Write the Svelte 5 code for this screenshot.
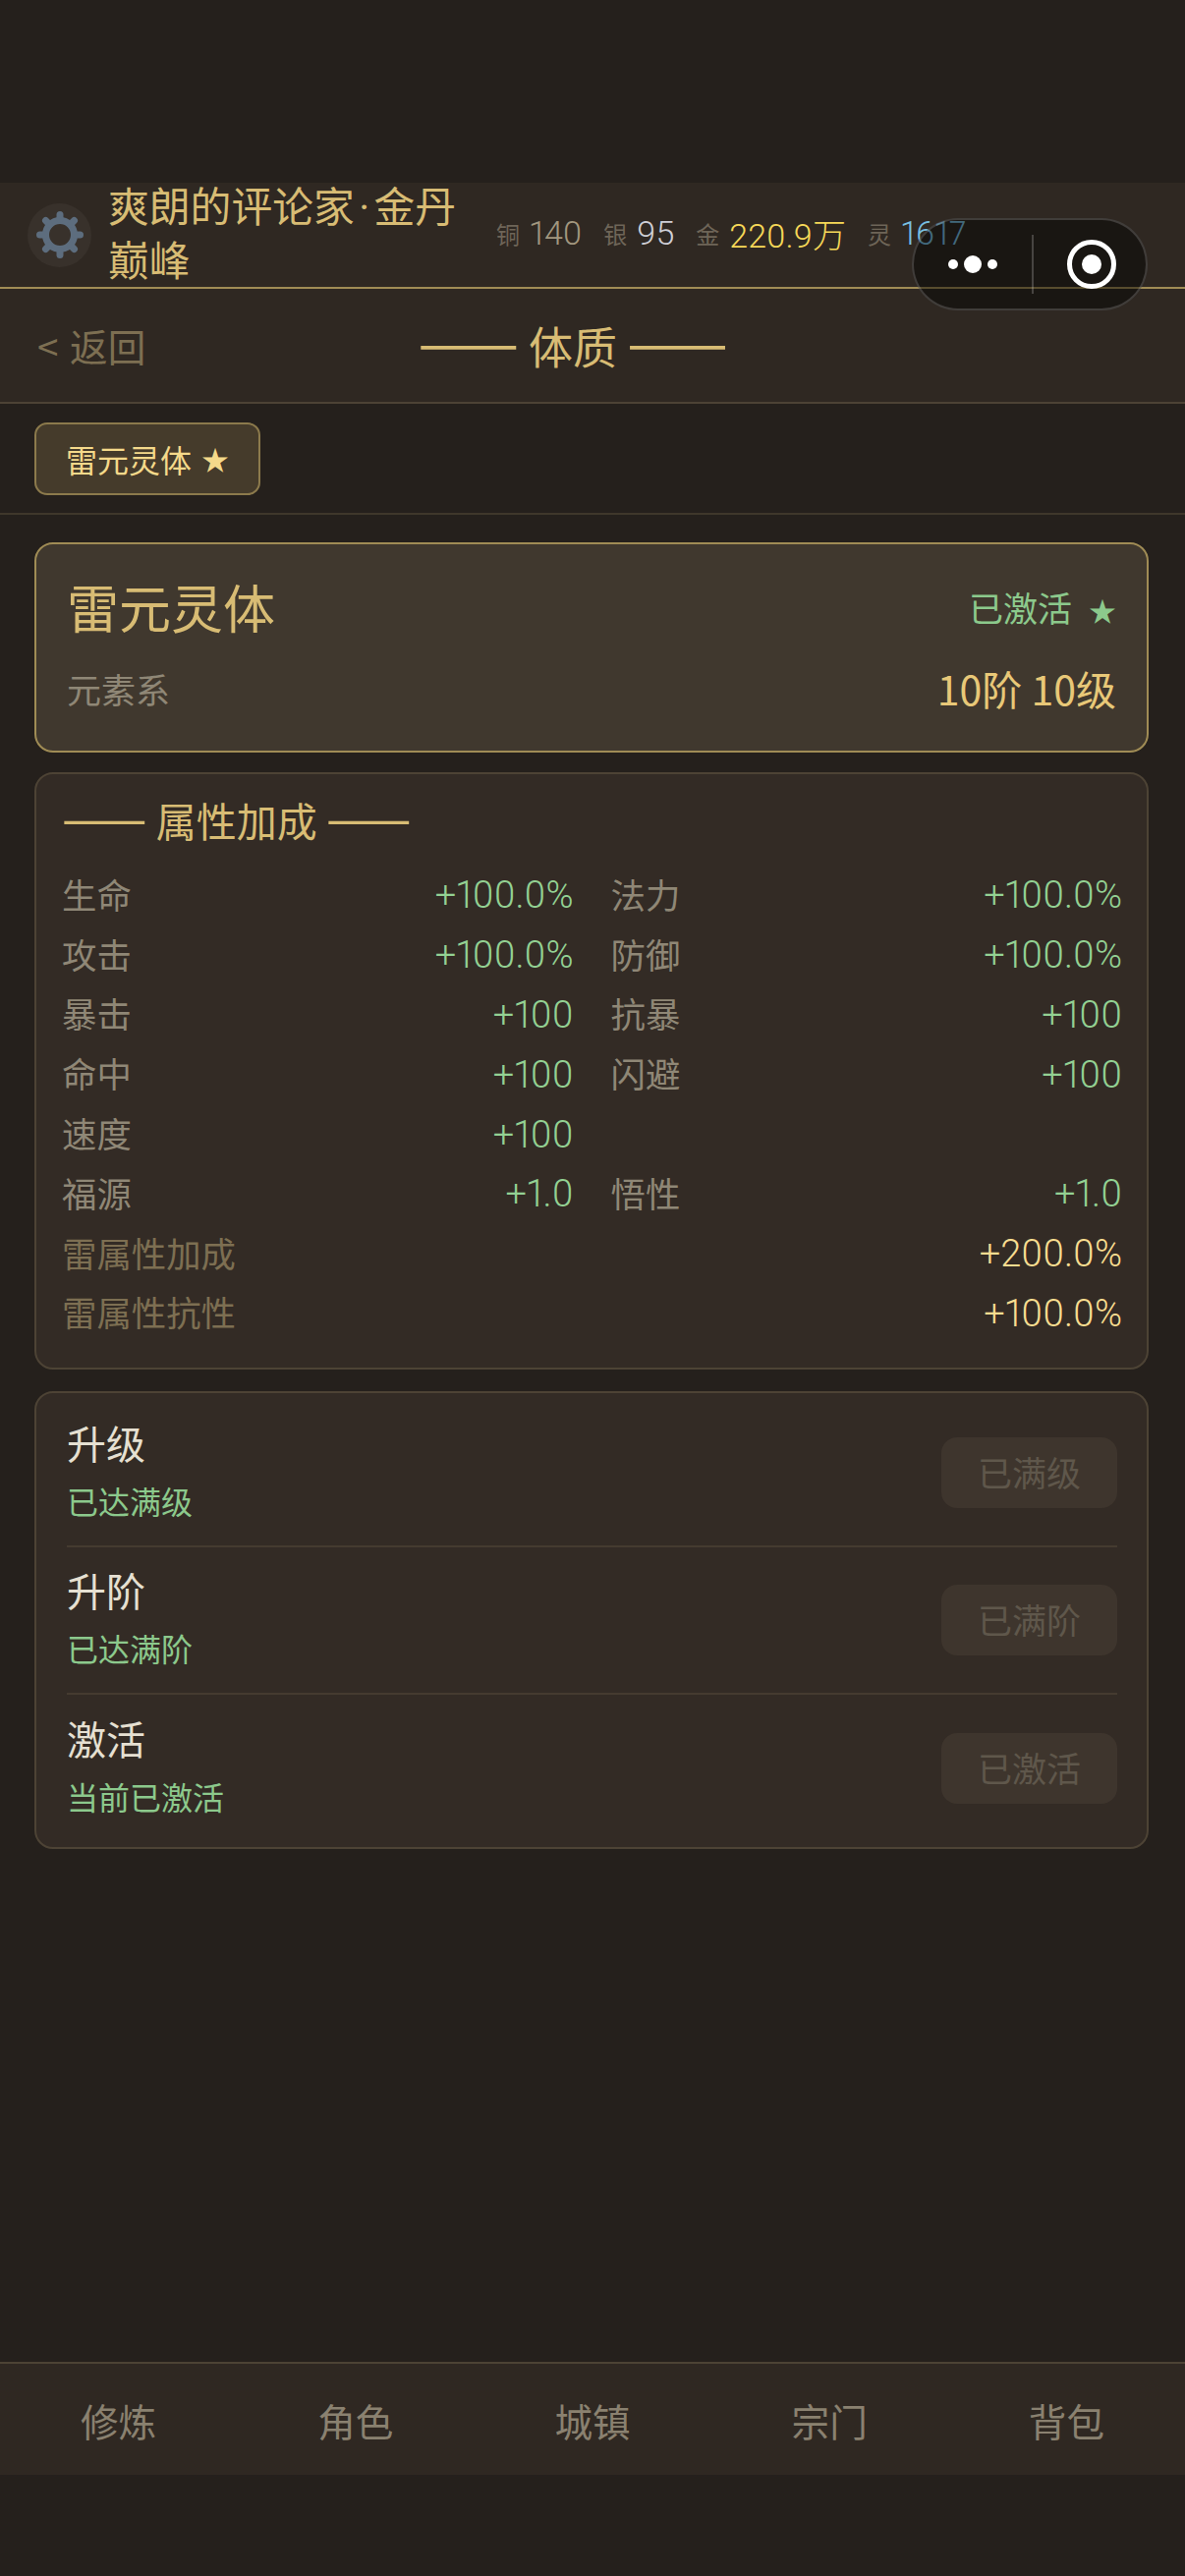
<script>
  const stats = [
    { label: '铜', value: '140', cls: 'copper' },
    { label: '银', value: '95', cls: 'silver' },
    { label: '金', value: '220.9万', cls: 'gold' },
    { label: '灵', value: '1617', cls: 'spirit' }
  ]
  const attrs = [
    ['生命', '+100.0%'], ['法力', '+100.0%'],
    ['攻击', '+100.0%'], ['防御', '+100.0%'],
    ['暴击', '+100'], ['抗暴', '+100'],
    ['命中', '+100'], ['闪避', '+100'],
    ['速度', '+100'], ['', ''],
    ['福源', '+1.0'], ['悟性', '+1.0']
  ]
  const extras = [
    ['雷属性加成', '+200.0%'],
    ['雷属性抗性', '+100.0%']
  ]
  const actions = [
    { name: '升级', note: '已达满级', btn: '已满级' },
    { name: '升阶', note: '已达满阶', btn: '已满阶' },
    { name: '激活', note: '当前已激活', btn: '已激活' }
  ]
  const tabs = ['修炼', '角色', '城镇', '宗门', '背包']
  const teeth = [0, 45, 90, 135, 180, 225, 270, 315]
</script>

<div class="page">
  <header class="top">
    <div class="avatar">
      <svg width="48" height="48" viewBox="0 0 48 48" fill="none" stroke="#5d6d7e">
        <circle cx="24" cy="24" r="14.5" stroke-width="7" />
        {#each teeth as a}
          <line x1="24" y1="8" x2="24" y2="3.5" stroke-width="7" stroke-linecap="round" transform="rotate({a} 24 24)" />
        {/each}
      </svg>
    </div>
    <div class="name">爽朗的评论家 · 金丹巅峰</div>
    <div class="stats">
      {#each stats as s}
        <span class="stat"><span class="stat-label">{s.label}</span><span class="num {s.cls}">{s.value}</span></span>
      {/each}
    </div>
  </header>

  <div class="capsule">
    <div class="dots"><i></i><i class="big"></i><i></i></div>
    <div class="sep"></div>
    <div class="target"><i></i></div>
  </div>

  <nav class="nav">
    <span class="back">&lt; 返回</span>
    <span class="title"><span class="dash">——</span> 体质 <span class="dash">——</span></span>
  </nav>

  <div class="chips">
    <span class="chip">雷元灵体<span class="star">★</span></span>
  </div>

  <main class="content">
    <section class="hero">
      <div class="hero-row">
        <span class="hero-name">雷元灵体</span>
        <span class="hero-state">已激活<span class="star wide">★</span></span>
      </div>
      <div class="hero-row second">
        <span class="hero-type">元素系</span>
        <span class="hero-level">10阶 10级</span>
      </div>
    </section>

    <section class="card attrs">
      <div class="section-title"><span class="dash">——</span> 属性加成 <span class="dash">——</span></div>
      <div class="grid">
        {#each attrs as [k, v]}
          <div class="row"><span class="key">{k}</span><span class="num val">{v}</span></div>
        {/each}
      </div>
      {#each extras as [k, v]}
        <div class="row extra"><span class="key">{k}</span><span class="num val">{v}</span></div>
      {/each}
    </section>

    <section class="card actions">
      {#each actions as a}
        <div class="action">
          <div>
            <div class="action-name">{a.name}</div>
            <div class="action-note">{a.note}</div>
          </div>
          <span class="action-btn">{a.btn}</span>
        </div>
      {/each}
    </section>
  </main>

  <footer class="tabbar">
    {#each tabs as t}
      <span class="tab">{t}</span>
    {/each}
  </footer>
</div>

<style>
  :global(body) {
    margin: 0;
    background: #25201c;
  }
  .page {
    position: relative;
    height: 2622px;
    padding-top: 186px;
    box-sizing: border-box;
    display: flex;
    flex-direction: column;
    background: #25201c;
    overflow: hidden;
    font-family: "Noto Sans CJK SC", sans-serif;
  }
  .num {
    font-family: Roboto, "Noto Sans CJK SC", sans-serif;
    font-variant-numeric: proportional-nums;
    font-weight: 300;
  }
  .dash {
    line-height: 0;
  }
  .star {
    font-size: 28px;
    margin-left: 10px;
  }
  .star.wide {
    margin-left: 17px;
  }
  .top {
    height: 108px;
    box-sizing: border-box;
    display: flex;
    align-items: center;
    padding-left: 28px;
    background: #2f2822;
    border-bottom: 2px solid #a08c55;
  }
  .avatar {
    width: 65px;
    height: 65px;
    flex: none;
    border-radius: 50%;
    background: #38312b;
    display: flex;
    align-items: center;
    justify-content: center;
  }
  .name {
    width: 360px;
    padding-right: 35px;
    flex: none;
    margin-left: 17px;
    font-family: Roboto, "Noto Sans CJK SC", sans-serif;
    font-size: 41.8px;
    line-height: 55px;
    word-spacing: -6px;
    color: #d8bc74;
  }
  .stats {
    display: flex;
    gap: 22px;
    margin-top: -4px;
    white-space: nowrap;
  }
  .stat {
    display: flex;
    align-items: center;
    gap: 10px;
  }
  .stat-label {
    font-size: 24px;
    color: #6e6558;
  }
  .stat .num {
    font-size: 34px;
  }
  .copper { color: #a2977f; }
  .silver { color: #cfcfd6; }
  .gold { color: #f6d858; }
  .spirit { color: #78bfe0; }

  .capsule {
    position: absolute;
    left: 928px;
    top: 222px;
    width: 240px;
    height: 94px;
    box-sizing: border-box;
    border-radius: 47px;
    border: 2px solid rgba(255, 255, 255, 0.17);
    background: rgba(0, 0, 0, 0.45);
    display: flex;
    align-items: center;
  }
  .dots {
    width: 120px;
    display: flex;
    align-items: center;
    justify-content: center;
    gap: 6px;
  }
  .dots i {
    width: 10px;
    height: 10px;
    border-radius: 50%;
    background: #fff;
  }
  .dots i.big {
    width: 18px;
    height: 18px;
  }
  .sep {
    width: 2px;
    height: 60px;
    background: rgba(255, 255, 255, 0.2);
  }
  .target {
    width: 50px;
    height: 50px;
    box-sizing: border-box;
    margin-left: 34px;
    border: 5px solid #fff;
    border-radius: 50%;
    display: flex;
    align-items: center;
    justify-content: center;
  }
  .target i {
    width: 20px;
    height: 20px;
    border-radius: 50%;
    background: #fff;
  }

  .nav {
    height: 117px;
    box-sizing: border-box;
    display: flex;
    align-items: center;
    padding: 0 188px 0 38px;
    background: #2f2822;
    border-bottom: 2px solid #4d4335;
  }
  .back {
    font-size: 38.6px;
    color: #7d6f52;
    word-spacing: 3px;
    margin-top: -2px;
  }
  .title {
    flex: 1;
    text-align: center;
    font-size: 45px;
    color: #d8bc74;
  }
  .title .dash {
    font-size: 1.36em;
  }
  .chips {
    height: 113px;
    box-sizing: border-box;
    display: flex;
    align-items: center;
    padding-left: 35px;
    border-bottom: 2px solid #3f372b;
  }
  .chip {
    height: 74px;
    width: 230px;
    box-sizing: border-box;
    display: flex;
    align-items: center;
    justify-content: center;
    border: 2px solid #8c7a4c;
    border-radius: 13px;
    background: #453b2b;
    font-size: 32px;
    color: #f4d98a;
  }
  .content {
    flex: 1;
    display: flex;
    flex-direction: column;
    gap: 20px;
    padding: 28px 37px 0 35px;
  }
  .hero {
    height: 214px;
    box-sizing: border-box;
    padding: 25px 31px 0;
    border: 2px solid #a08c55;
    border-radius: 19px;
    background: #40382e;
  }
  .hero-row {
    display: flex;
    justify-content: space-between;
    align-items: center;
  }
  .hero-row.second {
    margin-top: 15px;
  }
  .hero-name {
    font-size: 53px;
    line-height: 76px;
    color: #d8bc74;
  }
  .hero-state {
    font-size: 35px;
    color: #8cc98c;
  }
  .hero-type {
    font-size: 35px;
    color: #8f8776;
  }
  .hero-level {
    font-size: 41px;
    color: #e8c878;
  }
  .card {
    box-sizing: border-box;
    border: 2px solid #4d4335;
    border-radius: 19px;
    background: #332b25;
  }
  .attrs {
    height: 608px;
    padding: 16px 25px 0 26px;
  }
  .section-title {
    font-size: 41px;
    line-height: 60px;
    color: #d8bc74;
    margin-bottom: 15px;
  }
  .section-title .dash {
    font-size: 1.26em;
  }
  .grid {
    display: grid;
    grid-template-columns: 1fr 1fr;
    column-gap: 38px;
  }
  .row {
    display: flex;
    justify-content: space-between;
    align-items: center;
    height: 60.8px;
  }
  .key {
    font-size: 35.4px;
    color: #8f8776;
  }
  .val {
    font-size: 38px;
    padding-top: 4px;
    color: #93d193;
  }
  .extra .key {
    color: #7d6f52;
  }
  .extra .val {
    color: #f8dd90;
  }
  .actions {
    height: 466px;
    margin-top: 2px;
    padding: 7px 30px 0 31px;
    display: flex;
    flex-direction: column;
  }
  .action {
    height: 150px;
    flex: none;
    display: flex;
    justify-content: space-between;
    align-items: center;
    border-bottom: 2px solid #453b30;
    box-sizing: border-box;
  }
  .action:last-child {
    border-bottom: none;
  }
  .action-name {
    font-size: 40px;
    line-height: 56px;
    color: #e6e0d2;
  }
  .action-note {
    font-size: 32px;
    line-height: 62px;
    color: #8cc98c;
  }
  .action-btn {
    width: 179px;
    height: 72px;
    box-sizing: border-box;
    padding-bottom: 3px;
    display: flex;
    align-items: center;
    justify-content: center;
    border-radius: 16px;
    background: #3e352d;
    font-size: 35px;
    color: #5f574b;
  }
  .tabbar {
    height: 115px;
    margin-bottom: 103px;
    box-sizing: border-box;
    display: grid;
    grid-template-columns: repeat(5, 1fr);
    align-items: center;
    background: #2f2822;
    border-top: 2px solid #4d4335;
  }
  .tab {
    text-align: center;
    font-size: 38.6px;
    color: #8a8170;
  }
</style>
